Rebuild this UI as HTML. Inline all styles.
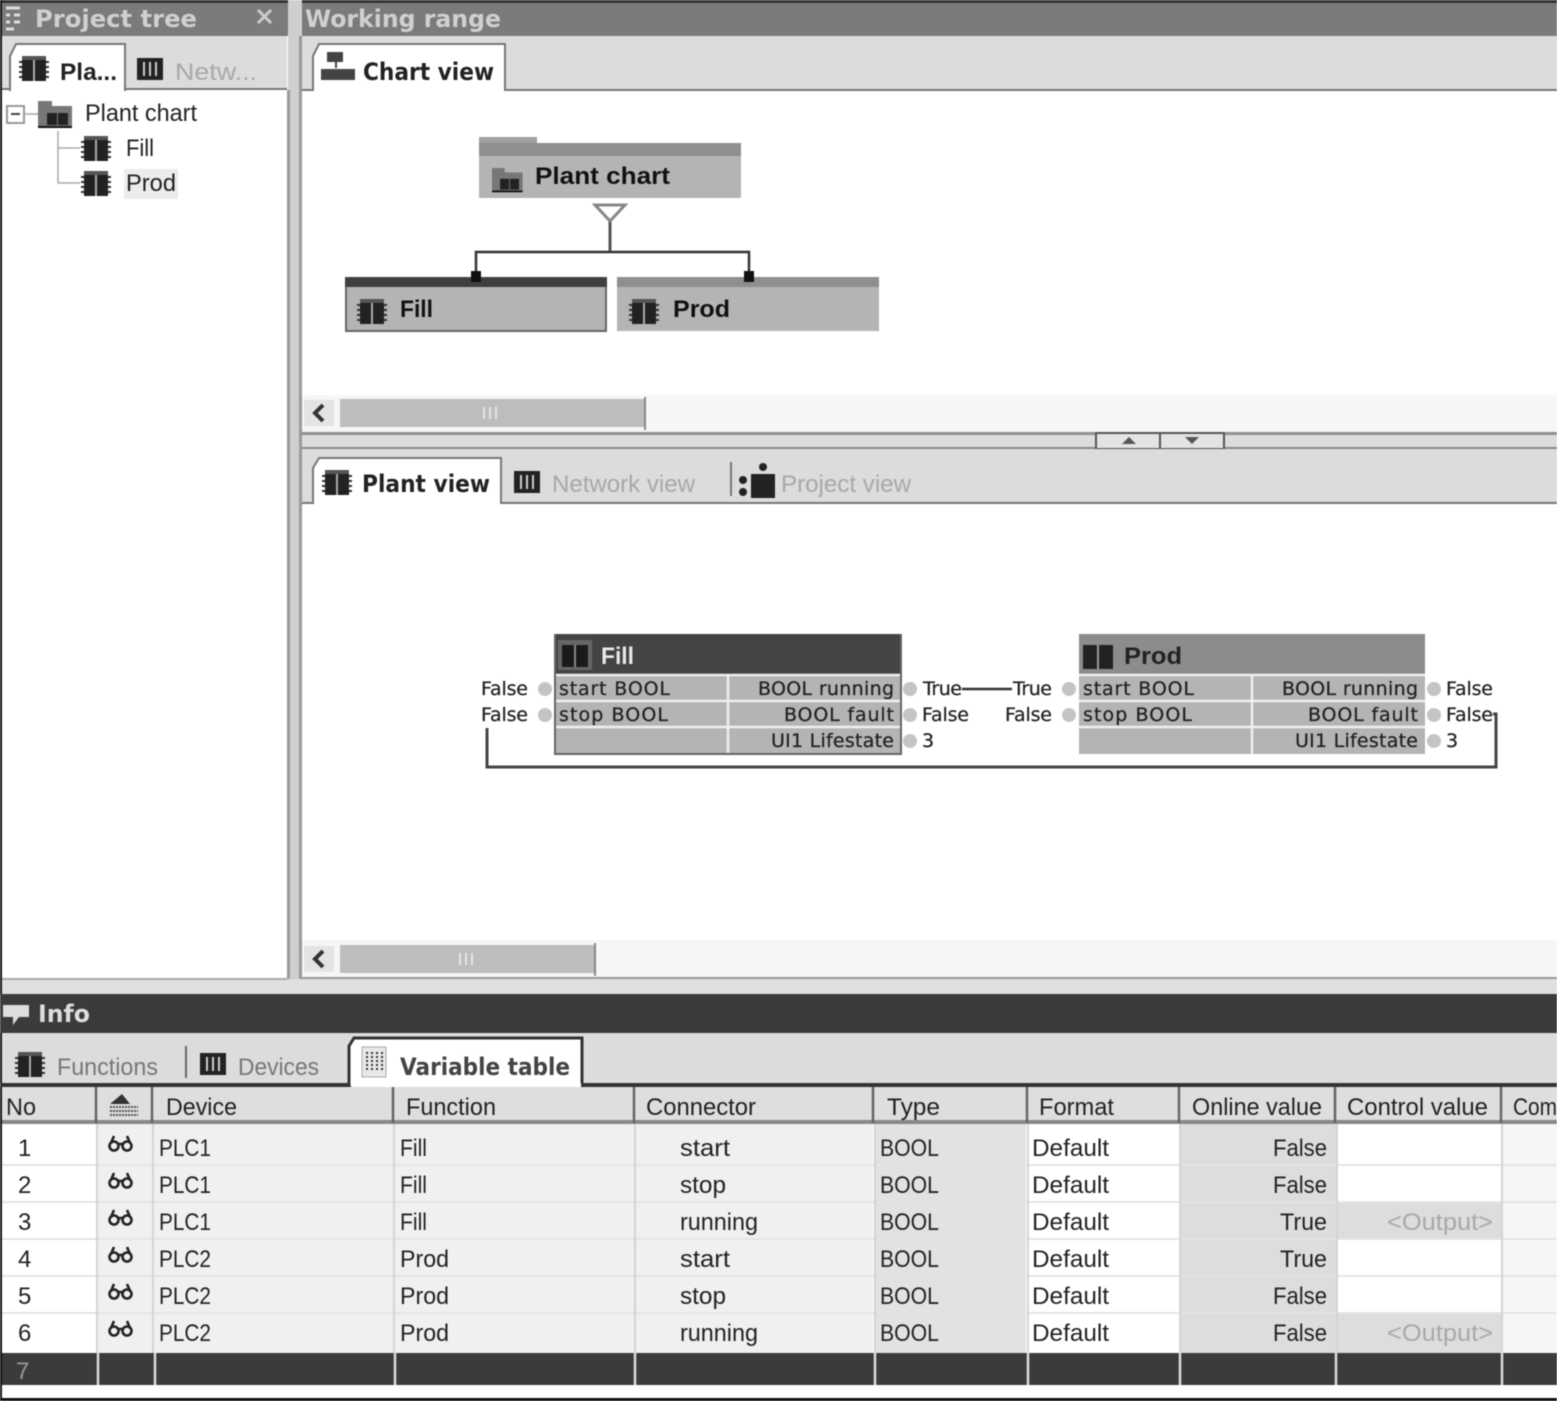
<!DOCTYPE html>
<html><head><meta charset="utf-8"><title>Project tree</title>
<style>
html,body{margin:0;padding:0;background:#fff;width:1557px;height:1401px;overflow:hidden}
svg{display:block;filter:blur(.45px)}
text{font-family:"Liberation Sans",sans-serif;font-size:24px;fill:#222}
.b{font-weight:bold}
.t{font-family:"DejaVu Sans","Liberation Sans",sans-serif;font-weight:bold;font-size:24px;fill:#d0d0d0}
.d{fill:#a8a8a8}
.s{font-size:21px}
.m{font-family:"DejaVu Sans",sans-serif;font-size:19px;fill:#222;stroke:#222;stroke-width:.25px}
</style></head><body>
<svg width="1557" height="1401" viewBox="0 0 1557 1401" xmlns="http://www.w3.org/2000/svg">
<defs>
<g id="chip"><rect x="4" y="1" width="24" height="25" fill="#222"/><rect x="15" y="1" width="2" height="25" fill="#aaa"/><rect x="4" y="1" width="24" height="4" fill="#555"/><path d="M1 7h3M1 12h3M1 17h3M1 22h3M28 7h3M28 12h3M28 17h3M28 22h3" stroke="#333" stroke-width="2"/></g>
<g id="net"><rect x="0" y="0" width="26" height="22" fill="#222"/><path d="M7 4v14M13 4v14M19 4v14" stroke="#ccc" stroke-width="2"/></g>
<g id="folder"><rect x="0" y="0" width="14" height="8" fill="#777"/><rect x="0" y="5" width="34" height="21" fill="#777"/><rect x="9" y="12" width="10" height="12" fill="#222"/><rect x="20" y="12" width="10" height="12" fill="#222"/><rect x="0" y="25" width="34" height="2" fill="#111"/></g>
<g id="glass" fill="none" stroke="#222" stroke-width="2.6"><circle cx="6" cy="12" r="4.5"/><circle cx="19" cy="12" r="4.5"/><path d="M10 10h5M3 9l3-7M22 9l-3-7"/></g>
</defs>
<rect width="1557" height="1401" fill="#fff"/>

<!-- Top title bars -->
<rect x="0" y="0" width="1557" height="3" fill="#333"/>
<rect x="0" y="3" width="288" height="33" fill="#7b7b7b"/>
<rect x="300" y="3" width="1257" height="33" fill="#7b7b7b"/>
<path d="M6 8h8M14 8h6M6 15h4M14 15h6M6 22h4M14 22h6M6 29h8" stroke="#ddd" stroke-width="3"/>
<text class="t" x="35" y="27" textLength="162" lengthAdjust="spacingAndGlyphs">Project tree</text>
<path d="M258 10l13 13M271 10l-13 13" stroke="#ccc" stroke-width="3"/>
<text class="t" x="305" y="27" textLength="196" lengthAdjust="spacingAndGlyphs">Working range</text>

<!-- Splitter & left border -->
<rect x="288" y="0" width="14" height="990" fill="#cfcfcf"/>
<rect x="287" y="90" width="3" height="890" fill="#9a9a9a"/>
<rect x="299" y="36" width="3" height="944" fill="#9a9a9a"/>
<rect x="0" y="0" width="2" height="1401" fill="#111"/>

<!-- Left tab strip -->
<rect x="2" y="36" width="285" height="52" fill="#dcdcdc"/>
<rect x="2" y="88" width="285" height="2" fill="#777"/>
<path d="M10 90V56l6-12H125V90z" fill="#fff" stroke="#777" stroke-width="2"/>
<rect x="11" y="86" width="113" height="6" fill="#fff"/>
<use href="#chip" x="18" y="55"/>
<text class="b" x="60" y="80" textLength="57" lengthAdjust="spacingAndGlyphs">Pla...</text>
<use href="#net" x="137" y="58"/>
<text class="d" x="175" y="80" textLength="82" lengthAdjust="spacingAndGlyphs">Netw...</text>

<!-- Tree -->
<rect x="7" y="106" width="17" height="17" fill="#fff" stroke="#999" stroke-width="2"/>
<path d="M11 114h9" stroke="#444" stroke-width="2"/>
<path d="M24 114h14M58 131v52M58 148h22M58 183h22" stroke="#aaa" stroke-width="1.5" fill="none"/>
<use href="#folder" x="38" y="101"/>
<text x="85" y="121" textLength="112" lengthAdjust="spacingAndGlyphs">Plant chart</text>
<use href="#chip" x="80" y="135"/>
<text x="126" y="156" textLength="28" lengthAdjust="spacingAndGlyphs">Fill</text>
<use href="#chip" x="80" y="170"/>
<rect x="124" y="169" width="54" height="30" fill="#ececec"/>
<text x="126" y="191" textLength="50" lengthAdjust="spacingAndGlyphs">Prod</text>

<!-- Right upper tab strip -->
<rect x="302" y="36" width="1255" height="53" fill="#dcdcdc"/>
<rect x="302" y="89" width="1255" height="2" fill="#777"/>
<path d="M313 90V56l6-12H505V90z" fill="#fff" stroke="#777" stroke-width="2"/>
<rect x="314" y="86" width="190" height="6" fill="#fff"/>
<path d="M328 53h14v8h-14zM336 61v7M322 70h32v9h-32z" fill="#444" stroke="#444" stroke-width="2"/>
<text class="b" x="363" y="80" textLength="131" lengthAdjust="spacingAndGlyphs" style="font-family:'DejaVu Sans'">Chart view</text>

<!-- Plant chart tree diagram -->
<rect x="479" y="137" width="58" height="20" fill="#a0a0a0"/>
<rect x="479" y="143" width="262" height="13" fill="#8f8f8f"/>
<rect x="479" y="156" width="262" height="42" fill="#b4b4b4"/>
<g transform="translate(492 168) scale(.9)"><use href="#folder"/></g>
<text class="b" x="535" y="184" textLength="135" lengthAdjust="spacingAndGlyphs" style="fill:#111">Plant chart</text>
<path d="M595 205h30l-15 16z" fill="#fff" stroke="#888" stroke-width="3"/>
<path d="M610 222v29" stroke="#555" stroke-width="3"/>
<path d="M476 275V252H749V275" fill="none" stroke="#333" stroke-width="2.5"/>
<rect x="345" y="277" width="262" height="54" fill="#b4b4b4"/>
<rect x="345" y="277" width="262" height="10" fill="#3f3f3f"/>
<path d="M346 287v44h260V287" fill="none" stroke="#666" stroke-width="2"/>
<use href="#chip" x="356" y="298"/>
<text class="b" x="400" y="317" textLength="33" lengthAdjust="spacingAndGlyphs" style="fill:#111">Fill</text>
<rect x="617" y="277" width="262" height="54" fill="#b4b4b4"/>
<rect x="617" y="277" width="262" height="10" fill="#8f8f8f"/>
<use href="#chip" x="628" y="298"/>
<text class="b" x="673" y="317" textLength="57" lengthAdjust="spacingAndGlyphs" style="fill:#111">Prod</text>
<rect x="471" y="271" width="10" height="11" fill="#111"/>
<rect x="744" y="271" width="10" height="11" fill="#111"/>

<!-- Upper scrollbar -->
<rect x="302" y="395" width="1255" height="37" fill="#f6f6f6"/>
<rect x="304" y="400" width="30" height="26" fill="#e4e4e4"/>
<path d="M323 405l-8 8 8 8" fill="none" stroke="#333" stroke-width="4"/>
<rect x="340" y="399" width="304" height="28" fill="#bdbdbd"/>
<rect x="644" y="397" width="2" height="33" fill="#888"/>
<path d="M484 407v12M490 407v12M496 407v12" stroke="#e4e4e4" stroke-width="2"/>

<!-- Horizontal splitter -->
<rect x="302" y="432" width="1255" height="3" fill="#909090"/>
<rect x="302" y="435" width="1255" height="14" fill="#dcdcdc"/>
<rect x="302" y="447" width="1255" height="2" fill="#888"/>
<rect x="1096" y="433" width="64" height="16" fill="#e4e4e4" stroke="#555" stroke-width="2"/>
<rect x="1160" y="433" width="64" height="16" fill="#e4e4e4" stroke="#555" stroke-width="2"/>
<path d="M1122 444l7-7 7 7z" fill="#555"/><path d="M1185 437h14l-7 7z" fill="#555"/>

<!-- Lower tab strip -->
<rect x="302" y="449" width="1255" height="53" fill="#dcdcdc"/>
<rect x="302" y="502" width="1255" height="2" fill="#777"/>
<path d="M313 503V468l6-10H501V503z" fill="#fff" stroke="#777" stroke-width="2"/>
<rect x="314" y="499" width="186" height="6" fill="#fff"/>
<use href="#chip" x="321" y="469"/>
<text class="b" x="362" y="492" textLength="128" lengthAdjust="spacingAndGlyphs" style="font-family:'DejaVu Sans'">Plant view</text>
<use href="#net" x="514" y="471"/>
<text class="d" x="552" y="492" textLength="143" lengthAdjust="spacingAndGlyphs">Network view</text>
<rect x="730" y="462" width="2" height="34" fill="#777"/>
<rect x="751" y="474" width="24" height="24" fill="#222"/><circle cx="763" cy="467" r="4" fill="#222"/>
<circle cx="743" cy="480" r="4" fill="#222"/><circle cx="743" cy="492" r="4" fill="#222"/>
<text class="d" x="781" y="492" textLength="130" lengthAdjust="spacingAndGlyphs">Project view</text>

<!-- Fill block -->
<rect x="554" y="634" width="347" height="120" fill="#b4b4b4"/>
<rect x="554" y="634" width="347" height="40" fill="#444"/>
<rect x="558" y="640" width="34" height="30" fill="#666"/><rect x="562" y="645" width="26" height="22" fill="#1a1a1a"/><rect x="574" y="645" width="2" height="22" fill="#888"/>
<text class="b" x="601" y="664" textLength="33" lengthAdjust="spacingAndGlyphs" style="fill:#e8e8e8">Fill</text>
<path d="M554 675h347M554 701h347M554 727h347M728 675v79" stroke="#f0f0f0" stroke-width="2.5"/>
<path d="M555 634v120h346V634" fill="none" stroke="#666" stroke-width="2"/>
<text class="m" x="559" y="695" textLength="111" lengthAdjust="spacing">start  BOOL</text>
<text class="m" x="559" y="721" textLength="109" lengthAdjust="spacing">stop  BOOL</text>
<text class="m" x="758" y="695" textLength="136" lengthAdjust="spacing">BOOL  running</text>
<text class="m" x="784" y="721" textLength="110" lengthAdjust="spacing">BOOL  fault</text>
<text class="m" x="771" y="747" textLength="123" lengthAdjust="spacing">UI1  Lifestate</text>
<g fill="#c4c4c4">
<circle cx="545" cy="689" r="7"/><circle cx="545" cy="715" r="7"/>
<circle cx="910" cy="689" r="7"/><circle cx="910" cy="715" r="7"/><circle cx="910" cy="741" r="7"/>
<circle cx="1069" cy="689" r="7"/><circle cx="1069" cy="715" r="7"/>
<circle cx="1434" cy="689" r="7"/><circle cx="1434" cy="715" r="7"/><circle cx="1434" cy="741" r="7"/>
</g>
<text class="m" x="481" y="695" textLength="47">False</text>
<text class="m" x="481" y="721" textLength="47">False</text>
<text class="m" x="923" y="695" textLength="39">True</text>
<text class="m" x="922" y="721" textLength="47">False</text>
<text class="m" x="922" y="747">3</text>
<text class="m" x="1013" y="695" textLength="39">True</text>
<text class="m" x="1005" y="721" textLength="47">False</text>
<path d="M962 689h50" stroke="#333" stroke-width="2.5"/>

<!-- Prod block -->
<rect x="1079" y="634" width="346" height="120" fill="#b4b4b4"/>
<rect x="1079" y="634" width="346" height="40" fill="#8c8c8c"/>
<rect x="1083" y="645" width="30" height="24" fill="#222"/><rect x="1097" y="645" width="2" height="24" fill="#999"/>
<text class="b" x="1124" y="664" textLength="58" lengthAdjust="spacingAndGlyphs">Prod</text>
<path d="M1079 675h346M1079 701h346M1079 727h346M1252 675v79" stroke="#f0f0f0" stroke-width="2.5"/>
<text class="m" x="1083" y="695" textLength="111" lengthAdjust="spacing">start  BOOL</text>
<text class="m" x="1083" y="721" textLength="109" lengthAdjust="spacing">stop  BOOL</text>
<text class="m" x="1282" y="695" textLength="136" lengthAdjust="spacing">BOOL  running</text>
<text class="m" x="1308" y="721" textLength="110" lengthAdjust="spacing">BOOL  fault</text>
<text class="m" x="1295" y="747" textLength="123" lengthAdjust="spacing">UI1  Lifestate</text>
<text class="m" x="1446" y="695" textLength="47">False</text>
<text class="m" x="1446" y="721" textLength="47">False</text>
<text class="m" x="1446" y="747">3</text>
<path d="M487 728V767H1496V714h-3" fill="none" stroke="#444" stroke-width="3"/>

<!-- Lower scrollbar -->
<rect x="302" y="940" width="1255" height="38" fill="#f6f6f6"/>
<rect x="304" y="946" width="30" height="26" fill="#e4e4e4"/>
<path d="M323 951l-8 8 8 8" fill="none" stroke="#333" stroke-width="4"/>
<rect x="340" y="945" width="254" height="28" fill="#bdbdbd"/>
<rect x="594" y="943" width="2" height="33" fill="#888"/>
<path d="M460 953v12M466 953v12M472 953v12" stroke="#e4e4e4" stroke-width="2"/>
<rect x="302" y="977" width="1255" height="2" fill="#999"/>
<rect x="2" y="979" width="1555" height="15" fill="#e0e0e0"/>
<rect x="2" y="978" width="285" height="2" fill="#aaa"/>

<!-- Info bar -->
<rect x="0" y="994" width="1557" height="39" fill="#3b3b3b"/>
<path d="M3 1005h26v12h-10l-6 8v-8H3z" fill="#ddd"/>
<text class="t" x="38" y="1022" textLength="52" lengthAdjust="spacingAndGlyphs" style="fill:#ddd">Info</text>

<!-- Info tabs -->
<rect x="2" y="1033" width="1555" height="50" fill="#dcdcdc"/>
<rect x="0" y="1083" width="1557" height="4" fill="#333"/>
<use href="#chip" x="14" y="1051"/>
<text class="d" x="57" y="1075" textLength="101" lengthAdjust="spacingAndGlyphs" style="fill:#777">Functions</text>
<rect x="185" y="1046" width="2" height="32" fill="#666"/>
<use href="#net" x="200" y="1053"/>
<text class="d" x="238" y="1075" textLength="81" lengthAdjust="spacingAndGlyphs" style="fill:#777">Devices</text>
<path d="M349 1087V1046l5-8H582V1087z" fill="#fff" stroke="#333" stroke-width="3"/>
<rect x="351" y="1083" width="230" height="6" fill="#fff"/>
<rect x="362" y="1047" width="24" height="30" fill="#e8e8e8" stroke="#aaa"/>
<path d="M367 1052v20M372 1052v20M377 1052v20M382 1052v20" stroke="#333" stroke-width="2" stroke-dasharray="2 2"/>
<text class="b" x="400" y="1075" textLength="170" lengthAdjust="spacingAndGlyphs" style="font-family:'DejaVu Sans';fill:#444">Variable table</text>

<!-- Table header -->
<rect x="2" y="1087" width="1555" height="35" fill="#dedede"/>
<rect x="2" y="1120" width="1555" height="4" fill="#888"/>
<path d="M96 1087v36M152 1087v36M393 1087v36M634 1087v36M873 1087v36M1027 1087v36M1179 1087v36M1335 1087v36M1501 1087v36" stroke="#666" stroke-width="2.5"/>
<text x="6" y="1115" textLength="30" lengthAdjust="spacingAndGlyphs">No</text>
<path d="M110 1104l12-10 8 10z" fill="#333"/><path d="M110 1107h28M110 1111h28M110 1115h28" stroke="#555" stroke-width="2" stroke-dasharray="2 1"/>
<text x="166" y="1115" textLength="71" lengthAdjust="spacingAndGlyphs">Device</text>
<text x="406" y="1115" textLength="90" lengthAdjust="spacingAndGlyphs">Function</text>
<text x="646" y="1115" textLength="110" lengthAdjust="spacingAndGlyphs">Connector</text>
<text x="887" y="1115" textLength="53" lengthAdjust="spacingAndGlyphs">Type</text>
<text x="1039" y="1115" textLength="75" lengthAdjust="spacingAndGlyphs">Format</text>
<text x="1192" y="1115" textLength="130" lengthAdjust="spacingAndGlyphs">Online value</text>
<text x="1347" y="1115" textLength="141" lengthAdjust="spacingAndGlyphs">Control value</text>
<text x="1513" y="1115" textLength="44" lengthAdjust="spacingAndGlyphs">Com</text>

<!-- Table body backgrounds -->
<rect x="98" y="1124" width="775" height="229" fill="#f0f0f0"/>
<rect x="876" y="1124" width="150" height="229" fill="#e2e2e2"/>
<rect x="1180" y="1124" width="157" height="229" fill="#dddddd"/>
<rect x="1338" y="1203" width="163" height="37" fill="#dddddd"/>
<rect x="1338" y="1314" width="163" height="39" fill="#dddddd"/>
<rect x="1503" y="1124" width="54" height="229" fill="#f6f6f6"/>
<path d="M2 1165H1557M2 1202H1557M2 1239H1557M2 1276H1557M2 1313H1557" stroke="#e4e4e4" stroke-width="2"/>
<path d="M97 1124v229M153 1124v229M394 1124v229M635 1124v229M875 1124v229M1028 1124v229M1180 1124v229M1337 1124v229M1502 1124v229" stroke="#d4d4d4" stroke-width="2"/>

<!-- Rows -->
<use href="#glass" x="108" y="1134"/><use href="#glass" x="108" y="1171"/><use href="#glass" x="108" y="1208"/><use href="#glass" x="108" y="1245"/><use href="#glass" x="108" y="1282"/><use href="#glass" x="108" y="1319"/>
<g transform="translate(0 -1)">
<text x="18" y="1157">1</text><text x="18" y="1194">2</text><text x="18" y="1231">3</text><text x="18" y="1268">4</text><text x="18" y="1305">5</text><text x="18" y="1342">6</text>
<text x="159" y="1157" textLength="52" lengthAdjust="spacingAndGlyphs">PLC1</text>
<text x="159" y="1194" textLength="52" lengthAdjust="spacingAndGlyphs">PLC1</text>
<text x="159" y="1231" textLength="52" lengthAdjust="spacingAndGlyphs">PLC1</text>
<text x="159" y="1268" textLength="52" lengthAdjust="spacingAndGlyphs">PLC2</text>
<text x="159" y="1305" textLength="52" lengthAdjust="spacingAndGlyphs">PLC2</text>
<text x="159" y="1342" textLength="52" lengthAdjust="spacingAndGlyphs">PLC2</text>
<text x="400" y="1157" textLength="27" lengthAdjust="spacingAndGlyphs">Fill</text>
<text x="400" y="1194" textLength="27" lengthAdjust="spacingAndGlyphs">Fill</text>
<text x="400" y="1231" textLength="27" lengthAdjust="spacingAndGlyphs">Fill</text>
<text x="400" y="1268" textLength="49" lengthAdjust="spacingAndGlyphs">Prod</text>
<text x="400" y="1305" textLength="49" lengthAdjust="spacingAndGlyphs">Prod</text>
<text x="400" y="1342" textLength="49" lengthAdjust="spacingAndGlyphs">Prod</text>
<text x="680" y="1157" textLength="50" lengthAdjust="spacingAndGlyphs">start</text>
<text x="680" y="1194" textLength="46" lengthAdjust="spacingAndGlyphs">stop</text>
<text x="680" y="1231" textLength="78" lengthAdjust="spacingAndGlyphs">running</text>
<text x="680" y="1268" textLength="50" lengthAdjust="spacingAndGlyphs">start</text>
<text x="680" y="1305" textLength="46" lengthAdjust="spacingAndGlyphs">stop</text>
<text x="680" y="1342" textLength="78" lengthAdjust="spacingAndGlyphs">running</text>
<text x="880" y="1157" textLength="59" lengthAdjust="spacingAndGlyphs">BOOL</text>
<text x="880" y="1194" textLength="59" lengthAdjust="spacingAndGlyphs">BOOL</text>
<text x="880" y="1231" textLength="59" lengthAdjust="spacingAndGlyphs">BOOL</text>
<text x="880" y="1268" textLength="59" lengthAdjust="spacingAndGlyphs">BOOL</text>
<text x="880" y="1305" textLength="59" lengthAdjust="spacingAndGlyphs">BOOL</text>
<text x="880" y="1342" textLength="59" lengthAdjust="spacingAndGlyphs">BOOL</text>
<text x="1032" y="1157" textLength="77" lengthAdjust="spacingAndGlyphs">Default</text>
<text x="1032" y="1194" textLength="77" lengthAdjust="spacingAndGlyphs">Default</text>
<text x="1032" y="1231" textLength="77" lengthAdjust="spacingAndGlyphs">Default</text>
<text x="1032" y="1268" textLength="77" lengthAdjust="spacingAndGlyphs">Default</text>
<text x="1032" y="1305" textLength="77" lengthAdjust="spacingAndGlyphs">Default</text>
<text x="1032" y="1342" textLength="77" lengthAdjust="spacingAndGlyphs">Default</text>
<text x="1273" y="1157" textLength="54" lengthAdjust="spacingAndGlyphs">False</text>
<text x="1273" y="1194" textLength="54" lengthAdjust="spacingAndGlyphs">False</text>
<text x="1280" y="1231" textLength="47" lengthAdjust="spacingAndGlyphs">True</text>
<text x="1280" y="1268" textLength="47" lengthAdjust="spacingAndGlyphs">True</text>
<text x="1273" y="1305" textLength="54" lengthAdjust="spacingAndGlyphs">False</text>
<text x="1273" y="1342" textLength="54" lengthAdjust="spacingAndGlyphs">False</text>
<text class="d" x="1387" y="1231" textLength="106" lengthAdjust="spacingAndGlyphs">&lt;Output&gt;</text>
<text class="d" x="1387" y="1342" textLength="106" lengthAdjust="spacingAndGlyphs">&lt;Output&gt;</text>
</g>

<!-- Selected row -->
<rect x="2" y="1353" width="1555" height="32" fill="#3b3b3b"/>
<path d="M98 1353v32M155 1353v32M395 1353v32M635 1353v32M875 1353v32M1028 1353v32M1180 1353v32M1336 1353v32M1502 1353v32" stroke="#ddd" stroke-width="2.5"/>
<text x="16" y="1379" style="fill:#999">7</text>
<rect x="0" y="1398" width="1557" height="3" fill="#111"/>
</svg>
</body></html>
